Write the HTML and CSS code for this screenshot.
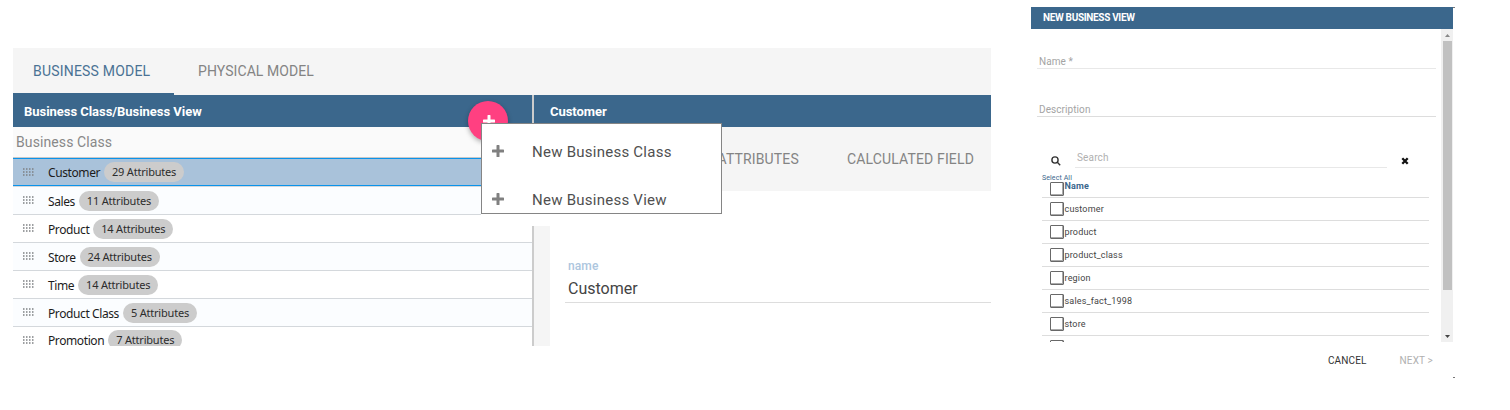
FILE: index.html
```html
<!DOCTYPE html>
<html lang="en">
<head>
<meta charset="utf-8">
<title>Business Model</title>
<link rel="stylesheet" href="styles.css">
</head>
<body>
<svg class="defs" aria-hidden="true">
  <defs>
    <symbol id="grip" viewBox="0 0 11 9"><path d="M0 1H11M0 4H11M0 7H11" stroke="#7d8083" stroke-width="1.6" stroke-dasharray="1.5 1.5"/></symbol>
    <symbol id="plus" viewBox="0 0 12 12"><path d="M4.5 .6Q4.5 0 5.1 0H6.9Q7.5 0 7.5 .6V4.5H11.4Q12 4.5 12 5.1V6.9Q12 7.5 11.4 7.5H7.5V11.4Q7.5 12 6.9 12H5.1Q4.5 12 4.5 11.4V7.5H.6Q0 7.5 0 6.9V5.1Q0 4.5 .6 4.5H4.5Z"/></symbol>
  </defs>
</svg>
<main class="stage">
  <section class="model">
    <nav class="tabs">
      <span class="tab active">BUSINESS MODEL</span>
      <span class="tab">PHYSICAL MODEL</span>
    </nav>
    <div class="panes">
      <div class="left">
        <div class="bar">Business Class/Business View</div>
        <div class="group">Business Class</div>
        <ul class="list">
          <li class="row selected"><svg class="grip"><use href="#grip"/></svg><span class="label">Customer</span><span class="pill">29 Attributes</span></li>
          <li class="row sales"><svg class="grip"><use href="#grip"/></svg><span class="label">Sales</span><span class="pill">11 Attributes</span></li>
          <li class="row"><svg class="grip"><use href="#grip"/></svg><span class="label">Product</span><span class="pill">14 Attributes</span></li>
          <li class="row"><svg class="grip"><use href="#grip"/></svg><span class="label">Store</span><span class="pill">24 Attributes</span></li>
          <li class="row"><svg class="grip"><use href="#grip"/></svg><span class="label">Time</span><span class="pill">14 Attributes</span></li>
          <li class="row"><svg class="grip"><use href="#grip"/></svg><span class="label">Product Class</span><span class="pill five">5 Attributes</span></li>
          <li class="row last"><svg class="grip"><use href="#grip"/></svg><span class="label">Promotion</span><span class="pill five">7 Attributes</span></li>
        </ul>
      </div>
      <div class="right">
        <div class="bar">Customer</div>
        <div class="subtabs"><span>ATTRIBUTES</span><span>CALCULATED FIELD</span></div>
        <div class="detail">
          <div class="gutter"></div>
          <div class="field"><span class="f-label">name</span><span class="f-value">Customer</span></div>
        </div>
      </div>
    </div>
    <div class="fab"><svg><use href="#plus"/></svg></div>
    <div class="menu-backdrop"></div>
    <div class="menu">
      <div class="item"><svg><use href="#plus"/></svg><span>New Business Class</span></div>
      <div class="item"><svg><use href="#plus"/></svg><span>New Business View</span></div>
    </div>
  </section>

  <section class="dialog">
    <header class="d-head"><span>NEW BUSINESS VIEW</span></header>
    <div class="d-body">
      <div class="form">
        <div class="input name"><span>Name *</span></div>
        <div class="input desc"><span>Description</span></div>
        <div class="search">
          <svg class="lens" viewBox="0 0 10 10"><circle cx="4" cy="4" r="3.1"/><path d="M6.3 6.3L9.2 9.2"/></svg>
          <div class="s-input"><span>Search</span></div>
          <svg class="clear" viewBox="0 0 8 8"><path d="M1.3 1.3L6.7 6.7M6.7 1.3L1.3 6.7"/></svg>
        </div>
        <div class="table">
          <div class="t-head"><span class="all">Select All</span><div class="check-line"><i class="box"></i><b>Name</b></div></div>
          <div class="t-row"><i class="box"></i><span>customer</span></div>
          <div class="t-row"><i class="box"></i><span>product</span></div>
          <div class="t-row"><i class="box"></i><span>product_class</span></div>
          <div class="t-row"><i class="box"></i><span>region</span></div>
          <div class="t-row"><i class="box"></i><span>sales_fact_1998</span></div>
          <div class="t-row"><i class="box"></i><span>store</span></div>
          <div class="t-row"><i class="box"></i></div>
        </div>
      </div>
      <div class="scroll">
        <svg class="arrow up" viewBox="0 0 5 3"><path d="M0 3L2.5 0L5 3Z"/></svg>
        <div class="thumb"></div>
        <svg class="arrow down" viewBox="0 0 5 3"><path d="M0 0L2.5 3L5 0Z"/></svg>
      </div>
    </div>
    <footer class="d-foot"><span class="cancel">CANCEL</span><span class="next">NEXT &gt;</span></footer>
    <i class="corner top"></i><i class="corner bottom"></i>
  </section>
</main>
</body>
</html>
```
FILE: styles.css
```css
* { box-sizing: border-box; }
body { margin: 0; background: #fff; font-family: Roboto, "Liberation Sans", sans-serif; }
span, b { white-space: nowrap; }
.defs { position: absolute; width: 0; height: 0; }
.stage { display: flex; align-items: flex-start; width: 1510px; height: 410px; overflow: hidden; padding-left: 13px; }

.model { position: relative; width: 978px; height: 298px; margin-top: 48px; }
.tabs { display: flex; height: 47px; background: #f5f5f5; }
.tab { height: 47px; padding: 0 0 0 20px; line-height: 46px; font-size: 14px; color: #848484; letter-spacing: .08px; }
.tab.active { width: 161px; color: #4a7294; letter-spacing: .2px; border-bottom: 2px solid #3b678c; }
.tab + .tab { padding-left: 24px; }
.panes { display: flex; height: 251px; overflow: hidden; }
.left { width: 519px; }
.right { flex: 1; border-left: 2px solid #ccc; }
.bar { height: 32px; line-height: 34px; padding-left: 11px; background: #3b678c; color: #fff; font-size: 13px; font-weight: 700; letter-spacing: -.04px; }
.right .bar { padding-left: 16px; }
.group { height: 31px; line-height: 30px; padding-left: 3px; background: #fafafa; border-bottom: 1px solid #c8c8c8; font-size: 14px; letter-spacing: .1px; color: #888; }
.list { list-style: none; margin: 0; padding: 0; font-family: "Noto Sans", sans-serif; font-size: 12px; color: #1c1c1c; }
.row { display: flex; align-items: center; height: 28px; padding-left: 10px; border-bottom: 1px solid #d4d8dc; background: #fff; }
.row:nth-child(even) { background: #fbfdff; }
.row.selected { background: #a9c2da; border-top: 1px solid #0b93ea; border-bottom: 1px solid #0b93ea; }
.row.sales { height: 29px; border-top: 1px solid #d4d8dc; }
.row.last { height: 26px; border: 0; }
.grip { width: 11px; height: 9px; margin-right: 14px; }
.label { line-height: 20px; margin: 2px 4px 0 0; letter-spacing: -.4px; }
.pill { height: 20px; line-height: 20px; width: 80px; text-align: center; border-radius: 10px; background: #ccc; color: #2c2c2c; font-size: 11px; letter-spacing: -.2px; }
.pill.five { width: 74px; }

.subtabs { display: flex; height: 64px; background: #f5f5f5; padding-right: 17px; justify-content: flex-end; gap: 48px; line-height: 64px; font-size: 14px; letter-spacing: .15px; color: #848484; }
.detail { display: flex; height: 155px; padding-top: 35px; }
.gutter { width: 16px; background: #f5f5f5; }
.field { flex: 1; height: 77px; margin-left: 15px; padding: 30px 0 0 3px; border-bottom: 1px solid #ddd; display: flex; flex-direction: column; }
.f-label { font-size: 12px; line-height: 20px; font-weight: 500; letter-spacing: .1px; color: #adc6de; }
.f-value { font-size: 16px; line-height: 25px; color: #444; }

.fab { position: absolute; left: 455px; top: 53px; width: 40px; height: 40px; border-radius: 50%; background: #ff4081; box-shadow: 0 2px 5px rgba(0,0,0,.3); display: flex; align-items: center; justify-content: center; }
.fab svg { width: 12px; height: 12px; fill: #fff; margin-left: 2px; }
.menu-backdrop { position: absolute; left: 468px; top: 143px; width: 241px; height: 35px; background: #fff; }
.menu { position: absolute; left: 468px; top: 75px; width: 241px; height: 91px; background: #fff; border: 1px solid #858585; padding-top: 4px; overflow: hidden; }
.item { display: flex; align-items: center; height: 48px; padding-left: 10px; font-size: 15px; letter-spacing: .25px; color: #505050; }
.item svg { width: 12px; height: 12px; fill: #808080; margin: -3px 28px 0 0; }

.dialog { position: relative; width: 422px; height: 371px; margin: 7px 0 0 40px; }
.d-head { height: 22px; line-height: 21px; padding-left: 12px; background: #3b678c; color: #fff; font-size: 10px; font-weight: 700; letter-spacing: -.33px; }
.d-body { display: flex; height: 313px; overflow: hidden; }
.form { width: 410px; }
.input { width: 399px; margin-left: 6px; padding-left: 2px; border-bottom: 1px solid #ddd; font-size: 10px; line-height: 12px; letter-spacing: .08px; color: #a4a4a4; display: flex; align-items: flex-end; }
.input.name { height: 40px; border-color: #e8e8e8; }
.input.desc { height: 48px; }
.search { display: flex; height: 51px; padding-left: 20px; align-items: flex-end; }
.lens { width: 10px; height: 10px; margin: 0 14px 2px 0; fill: none; stroke: #333; stroke-width: 1.4; }
.s-input { width: 312px; height: 20px; padding-left: 2px; border-bottom: 1px solid #e8e8e8; font-size: 10px; line-height: 20px; letter-spacing: .15px; color: #b0b0b0; }
.clear { width: 8px; height: 8px; margin: 0 0 3px 14px; stroke: #111; stroke-width: 2.3; }
.table { width: 387px; margin-left: 11px; font-size: 9px; letter-spacing: .17px; color: #444; }
.t-head { height: 30px; border-bottom: 1px solid #ddd; color: #3b678c; display: flex; flex-direction: column; padding-top: 6px; }
.all { font-size: 7px; line-height: 8px; letter-spacing: .1px; }
.check-line { display: flex; padding-left: 8px; line-height: 9px; }
.t-row { display: flex; align-items: center; height: 23px; padding-left: 8px; border-bottom: 1px solid #ddd; }
.box { flex: none; width: 14px; height: 14px; margin-right: .5px; border: 1px solid #686868; box-shadow: inset -1px -1px #aaa; border-radius: 1px; }
.scroll { width: 12px; background: #f0f0f0; display: flex; flex-direction: column; align-items: center; padding: 5px 0 4px; }
.arrow { width: 5px; height: 3px; fill: #888; }
.thumb { width: 9px; height: 249px; margin-top: 4px; background: #c1c1c1; }
.down { margin-top: auto; fill: #444; }
.d-foot { display: flex; justify-content: flex-end; gap: 33px; padding-right: 20px; font-size: 10px; line-height: 38px; letter-spacing: .15px; }
.cancel { color: #333; }
.next { color: #b0b0b0; }
.corner { position: absolute; right: -2px; width: 2px; height: 1px; background: #777; }
.top { top: 0; }
.bottom { bottom: 0; }
```
